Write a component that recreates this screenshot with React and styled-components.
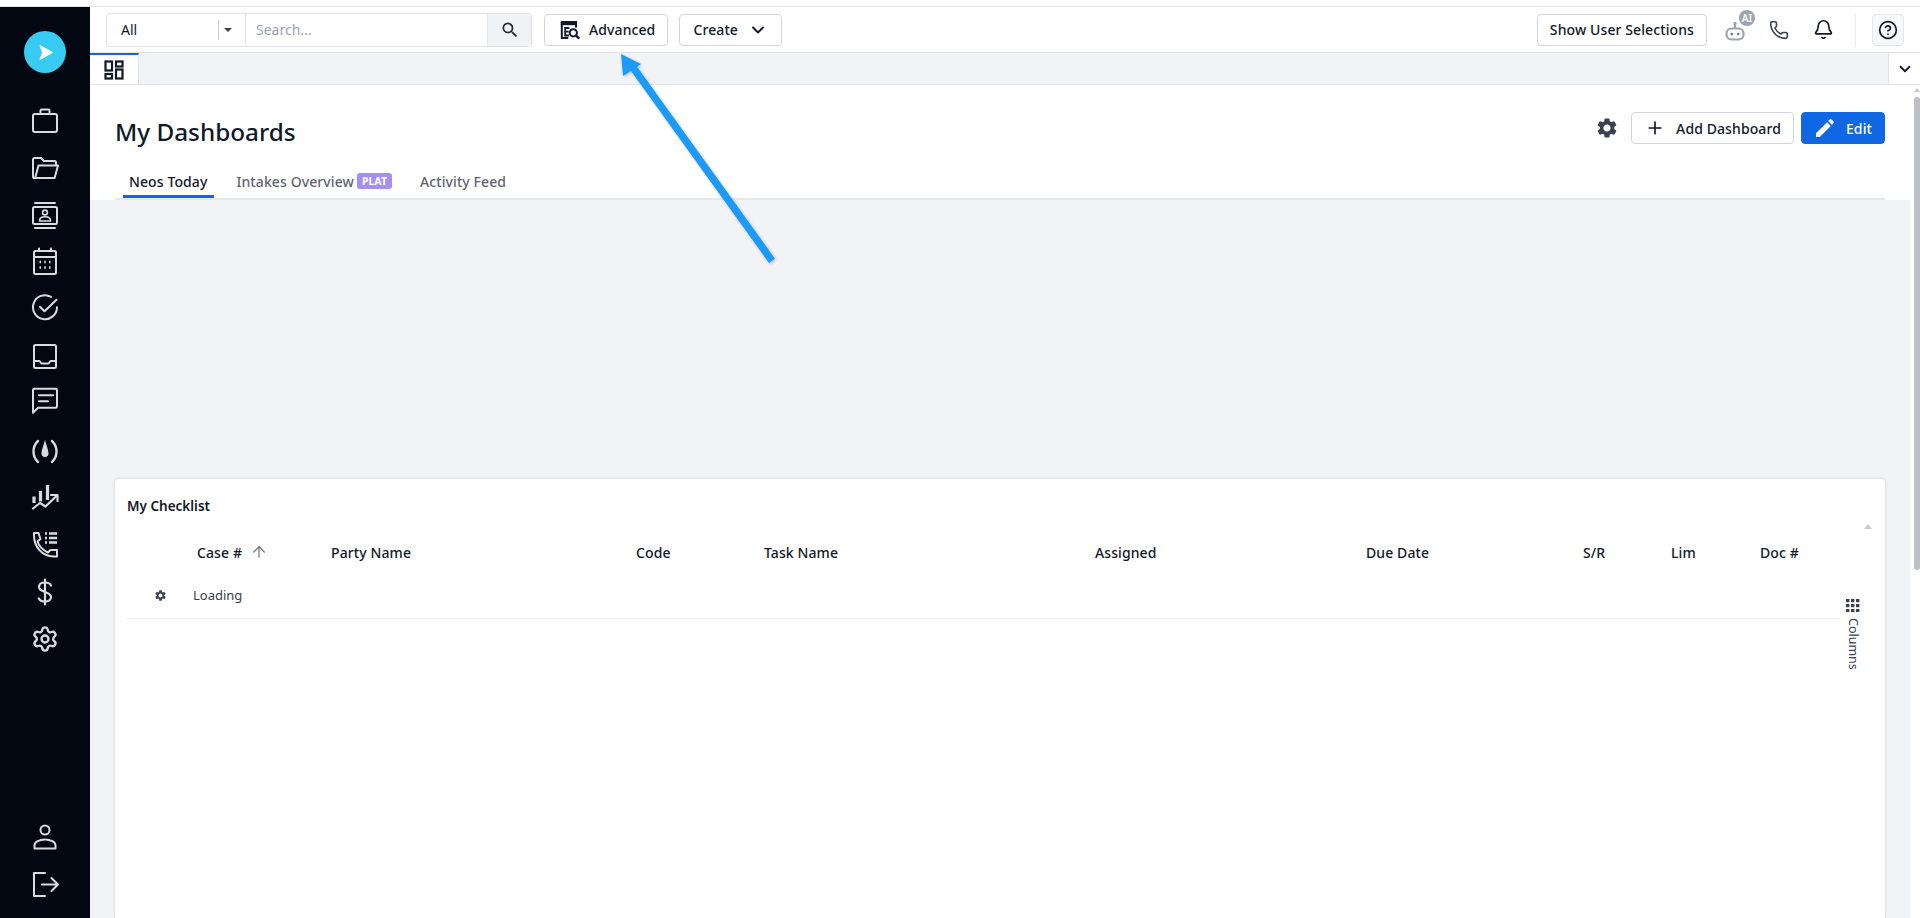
import React from "react";
import styled, { createGlobalStyle } from "styled-components";
import { Settings, Phone, Bell, ChevronDown, Plus, ArrowUp, CircleHelp } from "lucide-react";
import { MdEdit, MdSettings, MdSearch } from "react-icons/md";

const Global = createGlobalStyle`
  html, body { margin: 0; padding: 0; height: 100%; overflow: hidden; background: #fff; }
  body { font-family: "Noto Sans", "Open Sans", sans-serif; color: #111827; font-size: 14px; }
  * { box-sizing: border-box; }
`;

const Page = styled.div`
  position: relative;
  width: 1920px;
  height: 918px;
  overflow: hidden;
  display: flex;
  flex-direction: column;
`;
const TopStrip = styled.div`
  height: 7px;
  flex: none;
  background: #fff;
  border-bottom: 1px solid #e1e3e7;
`;
const Shell = styled.div`
  flex: 1;
  min-height: 0;
  display: flex;
`;
const Sidebar = styled.nav`
  width: 90px;
  flex: none;
  background: #030712;
  display: flex;
  flex-direction: column;
  align-items: center;
  padding: 24px 0 10px;
`;
const Logo = styled.div`
  width: 42px;
  height: 42px;
  flex: none;
  border-radius: 50%;
  background: #38cbf3;
  display: flex;
  align-items: center;
  justify-content: center;
  margin-bottom: 23.4px;
`;
const NavSlot = styled.div`
  width: 100%;
  height: 47.2px;
  flex: none;
  display: flex;
  align-items: center;
  justify-content: center;
  color: #d9dbdf;
`;
const Spacer = styled.div`
  flex: 1;
`;
const Main = styled.div`
  flex: 1;
  min-width: 0;
  display: flex;
  flex-direction: column;
`;
const Header = styled.header`
  height: 46px;
  flex: none;
  background: #fff;
  border-bottom: 1px solid #e1e3e7;
  display: flex;
  align-items: center;
  padding: 0 16px;
`;
const SearchGroup = styled.div`
  width: 426px;
  height: 34px;
  display: flex;
  border: 1px solid #dfe1e6;
  border-radius: 4px;
  overflow: hidden;
  margin-right: 12px;
`;
const ScopeSelect = styled.div`
  width: 139px;
  flex: none;
  display: flex;
  align-items: center;
  padding-left: 14px;
  border-right: 1px solid #dfe1e6;
  font-size: 14px;
  color: #111827;
`;
const ScopeDivider = styled.span`
  margin-left: auto;
  width: 1px;
  height: 20px;
  background: #c9ccd2;
`;
const Caret = styled.span`
  width: 0;
  height: 0;
  margin: 0 13px 0 5px;
  border-left: 4px solid transparent;
  border-right: 4px solid transparent;
  border-top: 4px solid #374151;
`;
const SearchField = styled.div`
  flex: 1;
  display: flex;
  align-items: center;
  padding-left: 10px;
  color: #9ca3af;
  font-size: 14px;
`;
const SearchBtn = styled.div`
  width: 44px;
  flex: none;
  background: #f1f2f4;
  border-left: 1px solid #e5e7eb;
  display: flex;
  align-items: center;
  justify-content: center;
  color: #1f2937;
`;
const Btn = styled.div`
  height: 32px;
  display: flex;
  align-items: center;
  border: 1px solid #d1d5db;
  border-radius: 4px;
  background: #fff;
  font-size: 14px;
  font-weight: 500;
  letter-spacing: 0.1px;
  color: #111827;
  padding: ${(p) => p.$pad || "0 13px"};
  gap: ${(p) => p.$gap || 8}px;
  margin-right: ${(p) => p.$mr || 0}px;
  white-space: nowrap;
`;
const PrimaryBtn = styled(Btn)`
  background: #0f67e3;
  border-color: #0f67e3;
  color: #fff;
`;
const Grow = styled.div`
  flex: 1;
`;
const IconWrap = styled.div`
  position: relative;
  width: ${(p) => p.$w}px;
  height: 32px;
  display: flex;
  align-items: center;
  justify-content: center;
  color: ${(p) => p.$c || "#111827"};
  flex: none;
`;
const BotGlyph = styled.svg`
  margin: 2px 4px 0 0;
`;
const AiBadge = styled.span`
  position: absolute;
  top: -4px;
  right: 2px;
  width: 16px;
  height: 16px;
  border-radius: 50%;
  background: #9ca3af;
  color: #fff;
  font-size: 10px;
  font-weight: 600;
  display: flex;
  align-items: center;
  justify-content: center;
`;
const VLine = styled.div`
  width: 1px;
  height: 34px;
  background: #e8eaed;
  margin: 0 16px 0 10px;
`;
const HelpBtn = styled.div`
  width: 32px;
  height: 32px;
  border: 1px solid #e5e7eb;
  border-radius: 4px;
  background: #f7f8fa;
  display: flex;
  align-items: center;
  justify-content: center;
  color: #111827;
`;
const TabStrip = styled.div`
  height: 32px;
  flex: none;
  background: #f2f3f5;
  border-bottom: 1px solid #e1e3e7;
  display: flex;
  justify-content: space-between;
`;
const DeskTab = styled.div`
  width: 49px;
  height: 31px;
  background: #fff;
  border-top: 2px solid #0f67e3;
  border-right: 1px solid #e1e3e7;
  display: flex;
  align-items: center;
  justify-content: center;
  color: #111827;
`;
const StripToggle = styled.div`
  width: 32px;
  height: 31px;
  background: #fff;
  border-left: 1px solid #e1e3e7;
  display: flex;
  align-items: center;
  justify-content: center;
  color: #111827;
`;
const ScrollArea = styled.div`
  flex: 1;
  min-height: 0;
  display: flex;
`;
const Content = styled.div`
  flex: 1;
  min-width: 0;
  display: flex;
  flex-direction: column;
  background: #f2f3f5;
`;
const Scrollbar = styled.div`
  width: 10px;
  flex: none;
  background: #fff;
  display: flex;
  flex-direction: column;
  align-items: center;
  padding: 3px 0 0 4px;
`;
const ScrollUp = styled.span`
  width: 0;
  height: 0;
  border-left: 3px solid transparent;
  border-right: 3px solid transparent;
  border-bottom: 4px solid #c4c6ca;
  margin-bottom: 5px;
`;
const ScrollThumb = styled.div`
  width: 6px;
  height: 473px;
  border-radius: 3px;
  background: #bdbfc3;
`;
const PageHead = styled.div`
  height: 115px;
  flex: none;
  background: #fff;
  padding: 0 25px;
  display: flex;
  flex-direction: column;
`;
const TitleRow = styled.div`
  height: 70px;
  flex: none;
  display: flex;
  align-items: flex-start;
`;
const Title = styled.h1`
  margin: 30px 0 0 0;
  font-size: 24.3px;
  line-height: 34px;
  font-weight: 500;
  color: #111827;
`;
const Actions = styled.div`
  margin-left: auto;
  margin-top: 27px;
  display: flex;
  align-items: center;
`;
const GearBtn = styled.div`
  width: 24px;
  height: 24px;
  margin-right: 12px;
  color: #374151;
  display: flex;
  align-items: center;
  justify-content: center;
`;
const Tabs = styled.div`
  flex: 1;
  display: flex;
  align-items: flex-end;
  border-bottom: 2px solid #e5e7eb;
  padding-left: 8px;
`;
const Tab = styled.div`
  height: 33px;
  display: flex;
  align-items: center;
  gap: 3px;
  padding: 2px 7px 0 6px;
  margin-right: ${(p) => p.$mr}px;
  font-size: 14px;
  font-weight: 500;
  letter-spacing: 0.1px;
  color: ${(p) => (p.$active ? "#111827" : "#5f6470")};
  border-bottom: 3px solid ${(p) => (p.$active ? "#0f67e3" : "transparent")};
  white-space: nowrap;
`;
const Plat = styled.span`
  width: 35px;
  height: 16px;
  border-radius: 3px;
  background: #a48ff0;
  color: #fff;
  font-size: 10.5px;
  font-weight: 700;
  letter-spacing: 0;
  display: flex;
  align-items: center;
  justify-content: center;
`;
const Gap = styled.div`
  height: 279px;
  flex: none;
`;
const Card = styled.section`
  position: relative;
  flex: 1;
  margin: 0 25px;
  background: #fff;
  border-radius: 4px 4px 0 0;
  box-shadow: 0 0 3px rgba(17, 24, 39, 0.18);
  padding: 0 12px;
`;
const CardTitle = styled.h2`
  margin: 0;
  padding-top: 17px;
  height: 50px;
  font-size: 13.5px;
  line-height: 20px;
  font-weight: 600;
  color: #111827;
`;
const HeadRow = styled.div`
  height: 48px;
  padding-bottom: 2px;
  display: grid;
  grid-template-columns: 70px 134px 305px 128px 331px 271px 217px 88px 89px 1fr;
  align-items: center;
  font-size: 14px;
  font-weight: 500;
  letter-spacing: 0.1px;
  color: #111827;
`;
const HeadCell = styled.div`
  display: flex;
  align-items: center;
  gap: 8px;
  white-space: nowrap;
`;
const LoadRow = styled.div`
  height: 42px;
  width: 1714px;
  display: flex;
  align-items: center;
  border-bottom: 1px solid #edeef0;
  font-size: 13px;
  color: #374151;
  padding: 0 0 5px 27px;
  gap: 26px;
`;
const ColumnsTool = styled.div`
  position: absolute;
  top: 120px;
  right: 25px;
  width: 14px;
  display: flex;
  flex-direction: column;
  align-items: center;
  gap: 6px;
  font-size: 12.5px;
  color: #374151;
`;
const VerticalText = styled.span`
  writing-mode: vertical-rl;
  line-height: 14px;
`;
const CardScrollUp = styled.span`
  position: absolute;
  top: 45px;
  right: 13px;
  width: 0;
  height: 0;
  border-left: 4px solid transparent;
  border-right: 4px solid transparent;
  border-bottom: 5px solid #c9cbcf;
`;
const Callout = styled.svg`
  position: absolute;
  left: 610px;
  top: 44px;
  pointer-events: none;
  overflow: visible;
`;

const S = { fill: "none", stroke: "currentColor", strokeWidth: 2, strokeLinecap: "round", strokeLinejoin: "round" };
const Nav = ({ children, dy = 0 }) => (
  <svg width="28" height="28" viewBox="0 0 28 28" {...S} overflow="visible">
    <g transform={`translate(0 ${dy})`}>{children}</g>
  </svg>
);

const Grid3 = () => (
  <svg width="14" height="13" viewBox="0 0 14 13" fill="currentColor">
    {[0, 5, 10].flatMap((y) => [0, 5, 10].map((x) => <rect key={x + "-" + y} x={x} y={y} width="3.4" height="3.2" />))}
  </svg>
);

const columns = ["Party Name", "Code", "Task Name", "Assigned", "Due Date", "S/R", "Lim", "Doc #"];

export default function App() {
  return (
    <Page>
      <Global />
      <TopStrip />
      <Shell>
        <Sidebar>
          <Logo>
            <svg width="20" height="20" viewBox="0 0 20 20"><path d="M5 3.500 17.500 10.500 5 17.500 7.500 10.500z" fill="#fff" stroke="#fff" strokeWidth="1" strokeLinejoin="round" /></svg>
          </Logo>
          <NavSlot><Nav><rect x="2" y="8" width="24" height="18" rx="2" /><path d="M9.500 8V4.500a1 1 0 0 1 1-1h7a1 1 0 0 1 1 1V8" /></Nav></NavSlot>
          <NavSlot><Nav dy={1}><path d="M5 24H3.600A1.600 1.600 0 0 1 2 22.400V5.600A1.600 1.600 0 0 1 3.600 4H10l3 3h10.400A1.600 1.600 0 0 1 25 8.600V11" /><path d="M7.500 11.500H27L23.600 24H4.200z" /></Nav></NavSlot>
          <NavSlot><Nav dy={1.500}><path d="M4 1.500h20M4 26.500h20" /><rect x="2" y="5.500" width="24" height="17" rx="1.500" /><circle cx="14" cy="11" r="2.400" strokeWidth="1.600" /><path d="M8.500 19.500c0-3 2.500-4.200 5.500-4.200s5.500 1.200 5.500 4.200z" strokeWidth="1.600" /></Nav></NavSlot>
          <NavSlot><Nav dy={-0.500}><rect x="3" y="3.500" width="22" height="23" rx="1.500" /><path d="M3 9.500h22M8 1V3.500M20 1V3.500" /><path d="M8.500 14.500h1.500M13.300 14.500h1.500M18 14.500h1.500M8.500 20h1.500M13.300 20h1.500M18 20h1.500" strokeWidth="2.600" strokeLinecap="butt" /></Nav></NavSlot>
          <NavSlot><Nav dy={-1.800}><path d="M20 3.600A12 12 0 1 0 26 14" /><path d="M9 13.500l4.500 4.500L25.500 6.500" /></Nav></NavSlot>
          <NavSlot><Nav><rect x="3" y="3" width="22" height="23" rx="1.500" /><path d="M3 19h5.500l2 2.500h7l2-2.500H25" /></Nav></NavSlot>
          <NavSlot><Nav dy={-2.200}><path d="M2 3.500A1.500 1.500 0 0 1 3.500 2h21A1.500 1.500 0 0 1 26 3.500v16a1.500 1.500 0 0 1-1.500 1.500H7l-5 5z" /><path d="M8 8.500h14M8 14.500h9" /></Nav></NavSlot>
          <NavSlot><Nav dy={1.500}><path d="M7 3.500C1 9 1 19 7 24.500M21 3.500c6 5.500 6 15.500 0 21" strokeWidth="2.400" /><path d="M14 2c1.200 6 3.500 10 3.500 14a3.500 3.500 0 0 1-7 0C10.500 12 12.800 8 14 2z" fill="currentColor" stroke="none" /></Nav></NavSlot>
          <NavSlot><Nav><path d="M3 13.500v6.500M9.500 8v10.500M16.500 2v15" strokeWidth="3.200" strokeLinecap="butt" /><path d="M2 25.500l7-5.500 5.500 3.500 11-10.500" strokeWidth="2.200" /><path d="M20 12h6.500v6" strokeWidth="2.200" /></Nav></NavSlot>
          <NavSlot><Nav><path d="M3 2h4.500l2 6-3 2.500c1.500 5 5 8.500 10.500 11l2.500-2.500H26v6.500h-3.500C11 25 3 16 3 4.500z" /><path d="M14 2.500h2M14 7h2M14 11.500h2M18 2.500h8M18 7h8M18 11.500h8" strokeWidth="2.400" strokeLinecap="butt" /></Nav></NavSlot>
          <NavSlot><Nav><path d="M14 1.500v25" strokeWidth="2.200" /><path d="M20 7.500c-1-2-3.200-3-6-3-3.600 0-6 1.800-6 4.500 0 6 12 4 12 10 0 2.700-2.500 4.500-6 4.500-2.900 0-5.200-1-6.200-3" strokeWidth="2.200" /></Nav></NavSlot>
          <NavSlot><Settings size={28} strokeWidth={2} /></NavSlot>
          <Spacer />
          <NavSlot><Nav><circle cx="14" cy="7" r="4.500" /><path d="M3.500 25.500v-3c0-3.500 5-6 10.500-6s10.500 2.500 10.500 6v3z" /></Nav></NavSlot>
          <NavSlot><Nav><path d="M14 3H3v23h11" /><path d="M11 14.500h16M20.500 8l6.500 6.500-6.500 6.500" /></Nav></NavSlot>
        </Sidebar>
        <Main>
          <Header>
            <SearchGroup>
              <ScopeSelect>All<ScopeDivider /><Caret /></ScopeSelect>
              <SearchField>Search...</SearchField>
              <SearchBtn><MdSearch size={20} /></SearchBtn>
            </SearchGroup>
            <Btn $mr={11} $gap={8} $pad="0 12px 0 14px">
              <svg width="22" height="22" viewBox="0 0 22 22" fill="none" stroke="#111827" strokeWidth="2">
                <path d="M2.800 3v16h6.500M17 3v5.500" />
                <rect x="1.800" y="2" width="16.200" height="4.200" fill="#111827" stroke="none" />
                <path d="M10.300 9H6.200v7.500h3.800M6.200 12.600h3.400" strokeWidth="1.900" />
                <circle cx="14.300" cy="13.800" r="3.600" strokeWidth="2" />
                <path d="M17 16.500l3.200 3.200" strokeWidth="2.400" />
              </svg>
              Advanced
            </Btn>
            <Btn $gap={10}>Create<ChevronDown size={20} strokeWidth={2.200} /></Btn>
            <Grow />
            <Btn $mr={10} $pad="0 12px">Show User Selections</Btn>
            <IconWrap $w={40} $c="#9ca3af">
              <BotGlyph width="20" height="20" viewBox="0 0 20 20" fill="none" stroke="currentColor" strokeWidth="2.200">
                <rect x="1.500" y="7.500" width="17" height="11" rx="5" />
                <path d="M10 7V3" /><circle cx="10" cy="2.500" r="1.700" fill="currentColor" stroke="none" />
                <circle cx="6.800" cy="13" r="1.300" fill="#6b7280" stroke="none" /><circle cx="13.200" cy="13" r="1.300" fill="#6b7280" stroke="none" />
              </BotGlyph>
              <AiBadge>AI</AiBadge>
            </IconWrap>
            <IconWrap $w={44} $c="#374151"><Phone size={20} strokeWidth={1.900} /></IconWrap>
            <IconWrap $w={44}><Bell size={21} strokeWidth={1.900} /></IconWrap>
            <VLine />
            <HelpBtn><CircleHelp size={20} strokeWidth={2} /></HelpBtn>
          </Header>
          <TabStrip>
            <DeskTab>
              <svg width="20" height="20" viewBox="0 0 20 20" fill="none" stroke="currentColor" strokeWidth="2.200">
                <rect x="1.500" y="1.500" width="6.500" height="9" /><rect x="12" y="1.500" width="6.500" height="5" /><rect x="1.500" y="14" width="6.500" height="4.500" /><rect x="12" y="9.500" width="6.500" height="9" />
              </svg>
            </DeskTab>
            <StripToggle><ChevronDown size={18} strokeWidth={2.400} /></StripToggle>
          </TabStrip>
          <ScrollArea>
            <Content>
              <PageHead>
                <TitleRow>
                  <Title>My Dashboards</Title>
                  <Actions>
                    <GearBtn><MdSettings size={24} /></GearBtn>
                    <Btn $mr={7} $gap={11} $pad="0 12px 0 13px"><Plus size={20} strokeWidth={2} />Add Dashboard</Btn>
                    <PrimaryBtn $gap={9} $pad="0 12px 0 11px"><MdEdit size={24} />Edit</PrimaryBtn>
                  </Actions>
                </TitleRow>
                <Tabs>
                  <Tab $active $mr={16}>Neos Today</Tab>
                  <Tab $mr={15}>Intakes Overview<Plat>PLAT</Plat></Tab>
                  <Tab $mr={0}>Activity Feed</Tab>
                </Tabs>
              </PageHead>
              <Gap />
              <Card>
                <CardTitle>My Checklist</CardTitle>
                <CardScrollUp />
                <HeadRow>
                  <div />
                  <HeadCell>Case #<ArrowUp size={18} strokeWidth={1.600} color="#6b7280" /></HeadCell>
                  {columns.map((c) => <HeadCell key={c}>{c}</HeadCell>)}
                </HeadRow>
                <LoadRow><MdSettings size={13} color="#374151" />Loading</LoadRow>
                <ColumnsTool><Grid3 /><VerticalText>Columns</VerticalText></ColumnsTool>
              </Card>
            </Content>
            <Scrollbar><ScrollUp /><ScrollThumb /></Scrollbar>
          </ScrollArea>
        </Main>
      </Shell>
      <Callout width="170" height="220" viewBox="0 0 170 220">
        <defs>
          <filter id="sh" x="-20%" y="-20%" width="140%" height="140%"><feDropShadow dx="1" dy="1" stdDeviation="1.500" floodColor="#000" floodOpacity="0.25" /></filter>
        </defs>
        <path d="M11 10 L13 32 L21 27 L159 219 L165 214.700 L27.100 22.700 L31 20 Z" fill="#1b9af5" filter="url(#sh)" />
      </Callout>
    </Page>
  );
}
